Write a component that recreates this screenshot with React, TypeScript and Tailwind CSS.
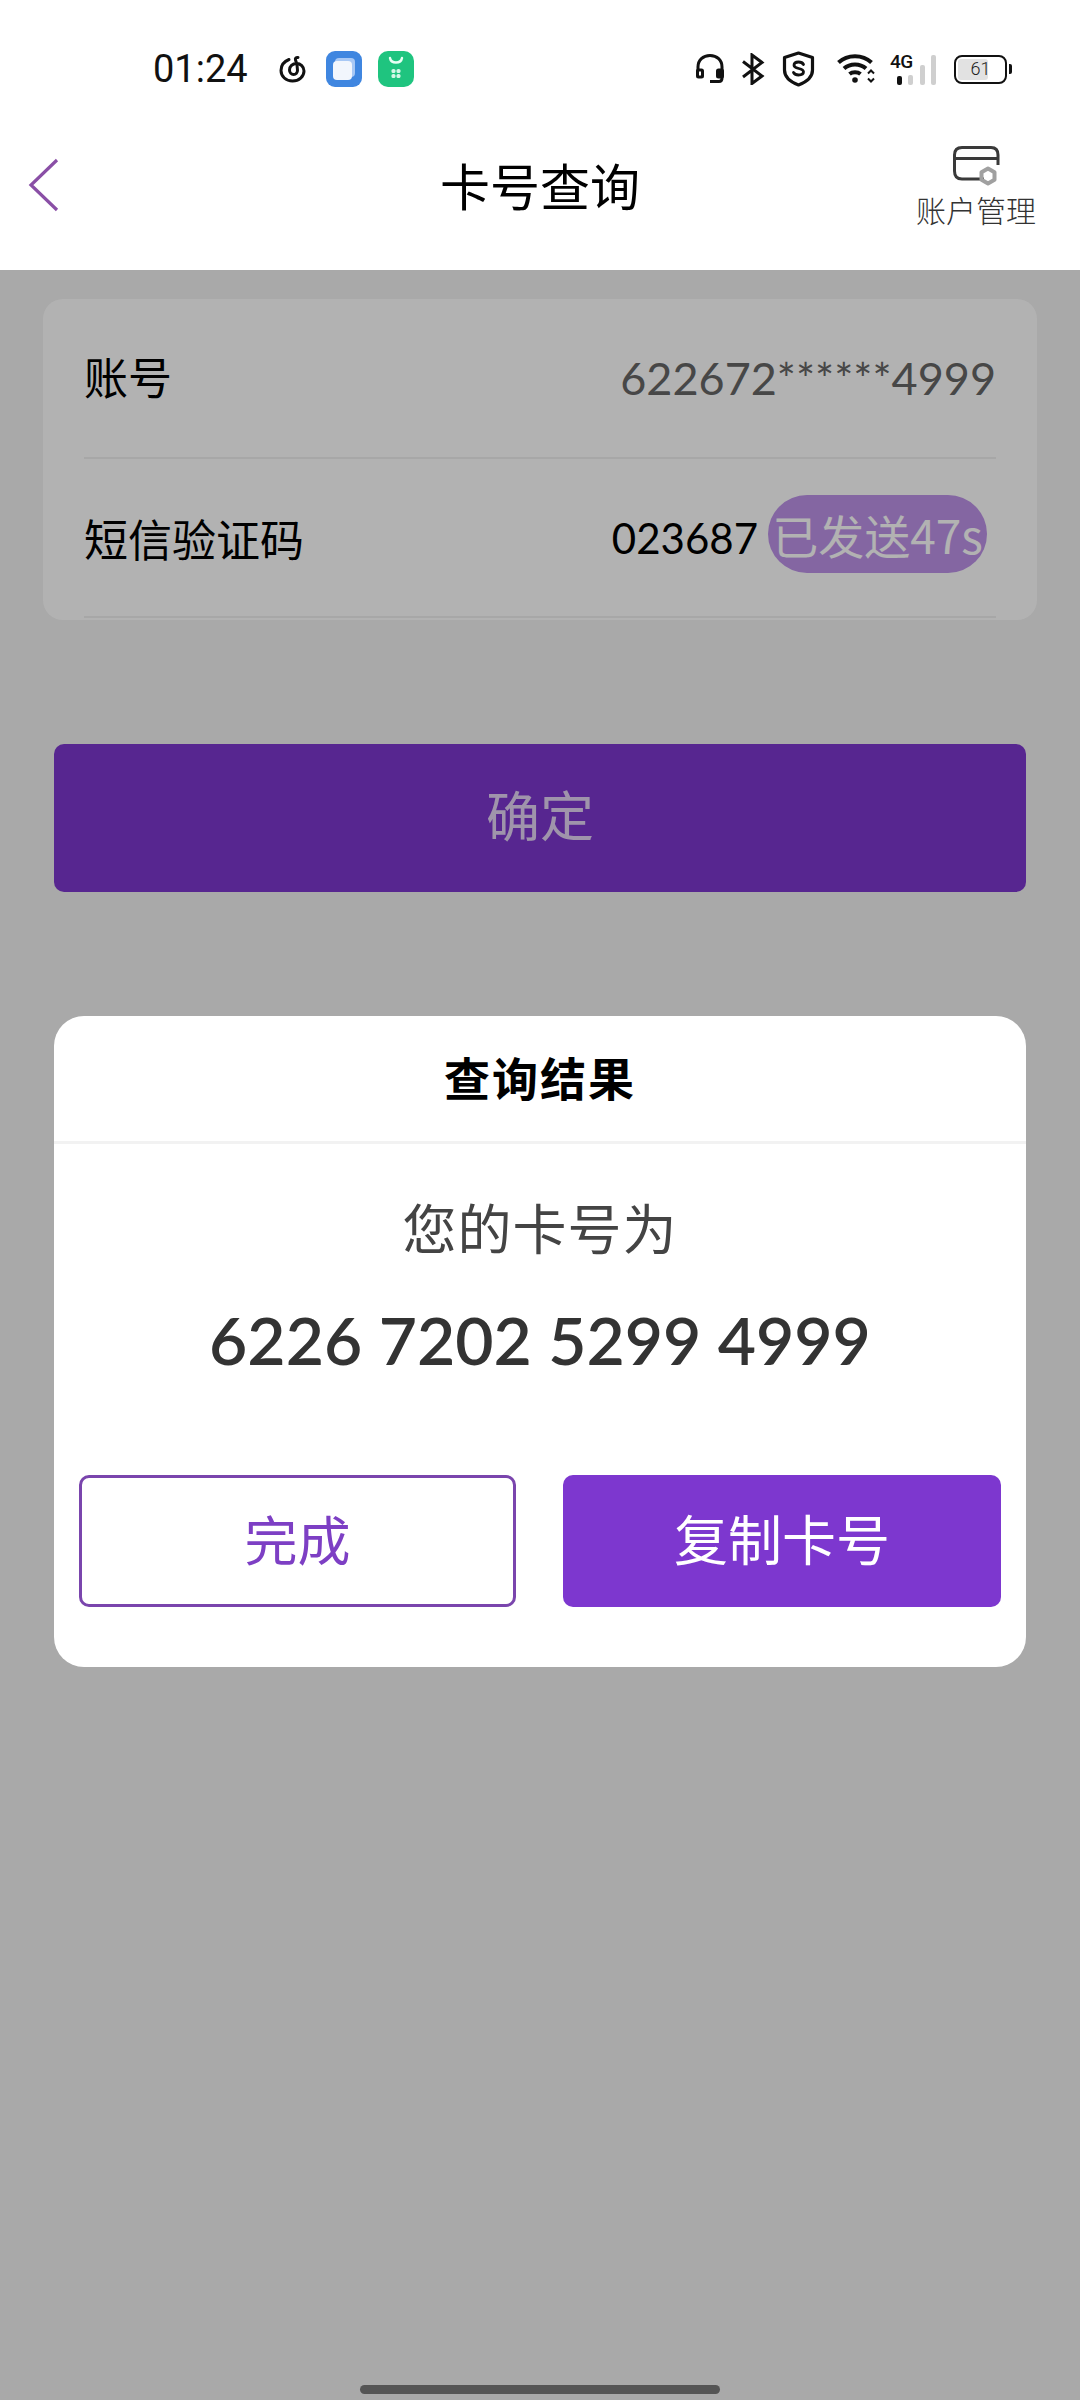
const sans = 'font-["Noto_Sans_CJK_SC","Noto_Sans",sans-serif]';

function NeteaseIcon() {
  return (
    <svg width="30" height="30" viewBox="0 0 30 30" fill="none" stroke="#111" strokeWidth="3" strokeLinecap="round">
      <path d="M11 5.500C6 7.500 3 11.500 3 16.500C3 22.500 8 27 14.500 27C21 27 26 22.500 26 17C26 12.500 22.500 9.500 18.500 9.500C14.500 9.500 11.500 12.500 11.500 16C11.500 18.800 13.500 20.500 15.500 20.500C18 20.500 19.500 18.600 19.500 16.200C19.500 13 18.500 8 17.500 6C17 4.600 18 3.200 20 3.400" />
    </svg>
  );
}

function CloudCardIcon() {
  return (
    <svg width="36" height="36" viewBox="0 0 36 36">
      <rect width="36" height="36" rx="9" fill="#3f86e0" />
      <rect x="9" y="7" width="20" height="19" rx="4" fill="#a8c8f5" />
      <rect x="7" y="10" width="19" height="19" rx="4" fill="#f2f6fd" />
    </svg>
  );
}

function StoreIcon() {
  return (
    <svg width="36" height="36" viewBox="0 0 36 36">
      <rect width="36" height="36" rx="10" fill="#1fc47f" />
      <path d="M12 7C13 13 23 13 24 7" fill="none" stroke="#e8fff4" strokeWidth="2.400" strokeLinecap="round" />
      <rect x="13.500" y="18" width="4" height="4" rx="1.600" fill="#d5f7e7" />
      <rect x="18.500" y="18" width="4" height="4" rx="1.600" fill="#d5f7e7" />
      <rect x="13.500" y="23" width="4" height="4" rx="1.600" fill="#d5f7e7" />
      <rect x="18.500" y="23" width="4" height="4" rx="1.600" fill="#d5f7e7" />
    </svg>
  );
}

function HeadsetIcon() {
  return (
    <svg width="30" height="32" viewBox="0 0 30 32" fill="none" stroke="#111" strokeWidth="3">
      <path d="M3 20V14C3 7 8 2.500 15 2.500C22 2.500 27 7 27 14V25C27 27.500 26 28.500 24 28.500H15" />
      <rect x="2.500" y="17" width="5" height="7" rx="1" fill="#fff" />
      <rect x="22.500" y="17" width="5" height="7" rx="1" fill="#111" />
    </svg>
  );
}

function BluetoothIcon() {
  return (
    <svg width="24" height="32" viewBox="0 0 24 32" fill="none" stroke="#111" strokeWidth="3">
      <path d="M2 8.500L21 23L11 30.500V2L21 9.500L2 24" />
    </svg>
  );
}

function ShieldIcon() {
  return (
    <svg width="33" height="36" viewBox="0 0 32 36" fill="none">
      <path d="M16 2L30 6.500V19C30 26 24 31 16 34C8 31 2 26 2 19V6.500Z" stroke="#111" strokeWidth="3.200" strokeLinejoin="round" />
      <path d="M21 13.500C20 11.500 18 11 16 11C13.500 11 11.500 12.200 11.500 14.300C11.500 18.500 21 16.500 21 20.800C21 23 18.800 24 16 24C13.800 24 12 23.200 11 21.500" stroke="#111" strokeWidth="2.800" strokeLinecap="round" />
    </svg>
  );
}

function WifiIcon() {
  return (
    <svg width="41" height="32" viewBox="0 0 40 32" fill="none" stroke="#111" strokeWidth="4">
      <path d="M2 9.500C11 1 26 1 35 9.500" />
      <path d="M7.500 15.500C13.500 10 23.500 10 29.500 15.500" />
      <path d="M13 21C16 18.500 21 18.500 24 21" />
      <circle cx="18.500" cy="27" r="2.800" fill="#111" stroke="none" />
      <path d="M31.500 20.500L34.500 17.500L37.500 20.500M31.500 25.500L34.500 28.500L37.500 25.500" strokeWidth="2" />
    </svg>
  );
}

function SignalIcon() {
  return (
    <div className="relative flex h-[31px] w-[46px] items-end justify-between">
      <span className="absolute left-0 top-0 font-['Roboto'] text-[19px] font-medium leading-[16px] tracking-[-0.5px] text-[#111]">4G</span>
      <span className="ml-[7px] h-[9px] w-[5px] rounded-[2px] bg-[#111]" />
      <span className="h-[10px] w-[5px] rounded-[2px] bg-[#cfcfcf]" />
      <span className="h-[20px] w-[5px] rounded-[2px] bg-[#cfcfcf]" />
      <span className="h-[30px] w-[5px] rounded-[2px] bg-[#cfcfcf]" />
    </div>
  );
}

function BatteryIcon() {
  return (
    <div className="flex items-center gap-[2px]">
      <div className="relative flex h-[29px] w-[53px] items-center justify-center overflow-hidden rounded-[8px] border-[2.500px] border-[#111]">
        <div className="absolute inset-y-[2px] left-[2px] w-[30px] rounded-[3px] bg-[#e2e2e2]" />
        <span className="relative font-['Roboto'] text-[18px] font-light leading-none text-[#222]">61</span>
      </div>
      <div className="h-[10px] w-[3px] rounded-r-[2px] bg-[#111]" />
    </div>
  );
}

function BackIcon() {
  return (
    <svg width="34" height="54" viewBox="0 0 34 54" fill="none" stroke="#8a4fa6" strokeWidth="3.200">
      <path d="M30 2L4 27L30 52" />
    </svg>
  );
}

function AccountIcon() {
  return (
    <svg width="50" height="40" viewBox="0 0 50 40" fill="none">
      <path d="M33 33H11Q3.500 33 3.500 25V9Q3.500 1.500 11 1.500H40Q47 1.500 47 9V19" stroke="#3a3a3a" strokeWidth="3" />
      <path d="M3.500 12.500H47" stroke="#3a3a3a" strokeWidth="3" />
      <path d="M37 22.500L43.500 26.200V33.800L37 37.500L30.500 33.800V26.200Z" stroke="#a0a0a0" strokeWidth="4" strokeLinejoin="round" />
    </svg>
  );
}

export default function App() {
  return (
    <div className={`flex h-[2400px] w-[1080px] flex-col overflow-hidden bg-[#f2f2f2] ${sans}`}>
      {/* Status bar */}
      <div className="flex h-[110px] shrink-0 items-center justify-between bg-white pl-[153px] pr-[68px] pt-[28px]">
        <div className="flex items-center">
          <span className="font-['Roboto'] text-[38px] font-normal leading-none text-[#111]">01:24</span>
          <div className="ml-[30px] flex items-center gap-[16px]">
            <div className="mr-[2px]"><NeteaseIcon /></div>
            <CloudCardIcon />
            <StoreIcon />
          </div>
        </div>
        <div className="flex items-center">
          <HeadsetIcon />
          <div className="ml-[16px]"><BluetoothIcon /></div>
          <div className="ml-[17px]"><ShieldIcon /></div>
          <div className="ml-[21px]"><WifiIcon /></div>
          <div className="ml-[13px]"><SignalIcon /></div>
          <div className="ml-[18px]"><BatteryIcon /></div>
        </div>
      </div>

      {/* Header */}
      <div className="relative flex h-[160px] shrink-0 items-center justify-center bg-white pb-[12px]">
        <div className="absolute left-[27px] top-[48px]"><BackIcon /></div>
        <h1 className="text-[50px] font-normal leading-none text-black">卡号查询</h1>
        <div className="absolute right-[44px] top-[36px] flex flex-col items-center">
          <AccountIcon />
          <span className="mt-[8px] text-[30px] font-light leading-none text-[#333]">账户管理</span>
        </div>
      </div>

      {/* Form + dialog */}
      <div className="relative flex-1">
        <div className="px-[43px] pt-[29px]">
          <div className="rounded-[20px] bg-white px-[41px] pb-[2px]">
            <div className="flex h-[160px] items-center justify-between border-b-2 border-[#f0f0f0]">
              <span className="pb-[5px] text-[44px] leading-none text-black">账号</span>
              <span className="font-['Lato'] text-[45px] font-normal leading-none text-[#666]">622672******4999</span>
            </div>
            <div className="flex h-[159px] items-center justify-between border-b-2 border-[#f0f0f0]">
              <span className="text-[44px] leading-none text-black">短信验证码</span>
              <div className="flex items-center">
                <span className="font-['Lato'] text-[42px] leading-none text-black">023687</span>
                <span className="mb-[8px] ml-[10px] mr-[9px] flex h-[78px] w-[219px] items-center justify-center rounded-[39px] bg-[#bd93e9] text-[46px] font-normal leading-none text-white">已发送47s</span>
              </div>
            </div>
          </div>
          <button className="mx-[11px] mt-[124px] flex h-[148px] w-[972px] items-center justify-center rounded-[10px] bg-[#7d37cf] pb-[8px] text-[54px] leading-none text-[#e4d5f5]">确定</button>
        </div>

        {/* Dialog overlay */}
        <div className="absolute inset-0 bg-black/30 px-[54px] pt-[746px]">
          <div className="h-[651px] rounded-[30px] bg-white">
            <div className="flex h-[128px] items-center justify-center border-b-[3px] border-[#f2f2f2] pb-[5px]">
              <h2 className="text-[46px] font-bold leading-none tracking-[2px] text-black">查询结果</h2>
            </div>
            <div className="pt-[56px] text-center">
              <p className="text-[54px] font-normal leading-none tracking-[1px] text-[#444]">您的卡号为</p>
              <p className="mt-[53px] font-['Lato'] text-[66px] font-semibold leading-none text-[#333]">6226 7202 5299 4999</p>
            </div>
            <div className="mt-[102px] flex justify-between px-[25px]">
              <button className="flex h-[132px] w-[437px] items-center justify-center rounded-[10px] border-[3px] border-[#7a45ad] pb-[6px] text-[53px] leading-none text-[#7d3fc4]">完成</button>
              <button className="flex h-[132px] w-[438px] items-center justify-center rounded-[10px] bg-[#7d37cf] pb-[6px] text-[54px] leading-none text-white">复制卡号</button>
            </div>
          </div>
        </div>

        {/* Home indicator */}
        <div className="absolute bottom-[6px] left-[360px] h-[9px] w-[360px] rounded-full bg-[#555]" />
      </div>
    </div>
  );
}
